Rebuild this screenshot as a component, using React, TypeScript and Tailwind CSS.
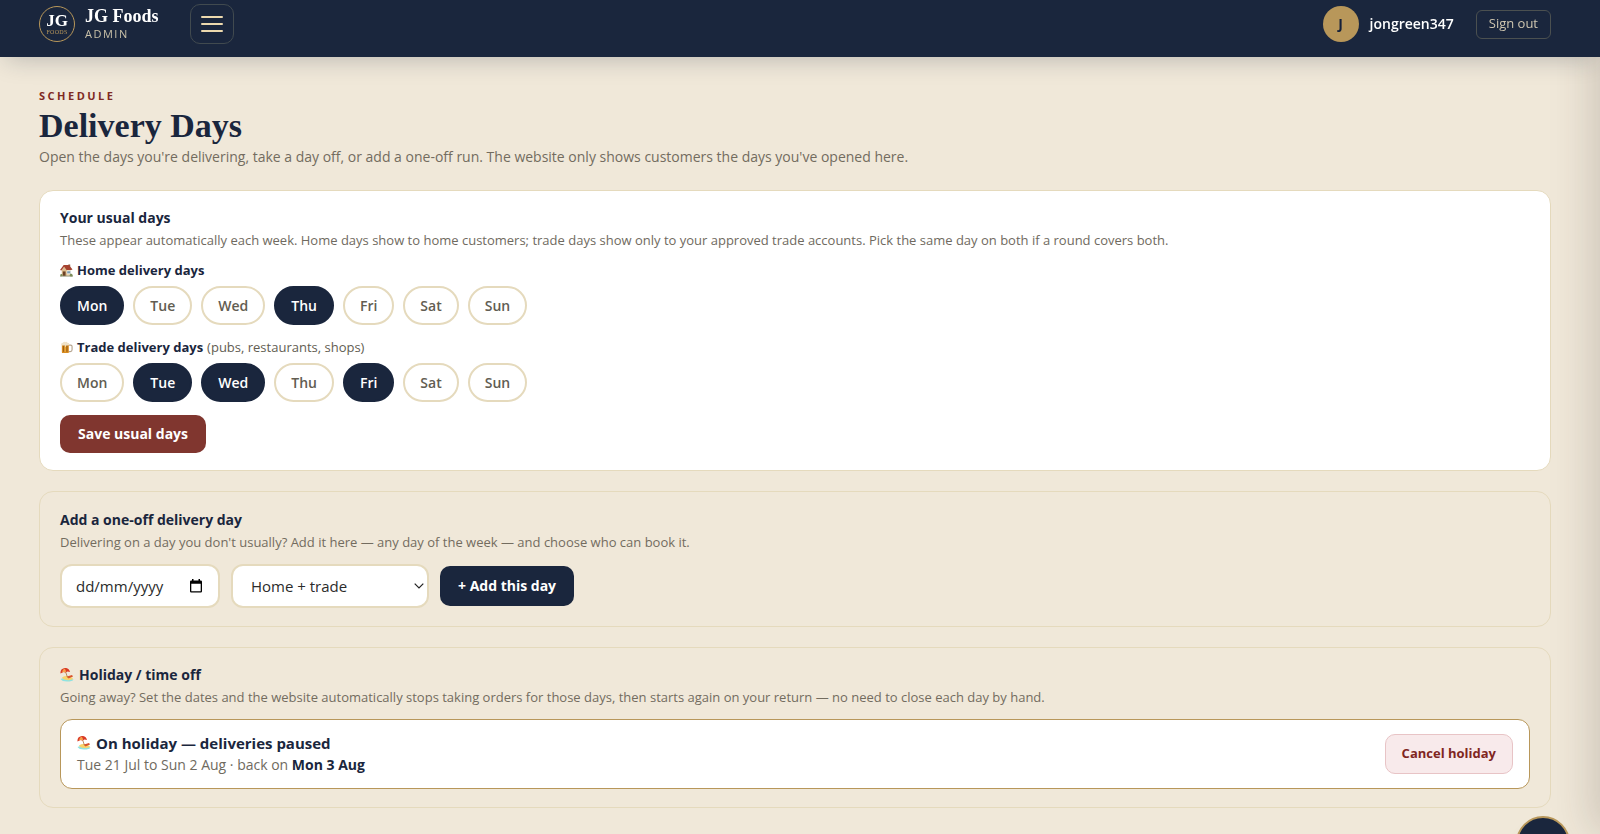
import React, { useState } from 'react';

type IconProps = { className?: string };

const DAYS = ['Mon', 'Tue', 'Wed', 'Thu', 'Fri', 'Sat', 'Sun'];

const HouseIcon: React.FC<IconProps> = ({ className }) => (
  <svg viewBox="0 0 28 28" className={className} aria-hidden="true">
    <rect x="18" y="1" width="4" height="8" fill="#8f5a42" />
    <path d="M4 12 10 5l13 6v15H4z" fill="#ead6b4" />
    <path d="M4 13 10 6l5 7v13H4z" fill="#dcbc8e" />
    <path d="M0 13 8 2h11l8 10-3 1H14L9 6l-6 8z" fill="#a5422f" />
    <rect x="6" y="16" width="6" height="10" fill="#6b4026" />
    <rect x="15" y="15" width="8" height="6" fill="#7d9db0" stroke="#fff" strokeWidth="1" />
    <path d="M0 25h28v2H0z" fill="#8f8f72" />
    <circle cx="24" cy="24" r="3" fill="#7b8c58" />
    <circle cx="3" cy="24" r="2.5" fill="#7b8c58" />
  </svg>
);

const BeerIcon: React.FC<IconProps> = ({ className }) => (
  <svg viewBox="0 0 28 28" className={className} aria-hidden="true">
    <path d="M18 9h5q3 0 3 3v7q0 4-4 4h-4" fill="none" stroke="#b5a48f" strokeWidth="2.5" />
    <path d="M4 6h15v18q0 2-2 2H6q-2 0-2-2z" fill="#d98c1f" />
    <path d="M7 9h2v14H7zM14 9h2v14h-2z" fill="#8a5216" />
    <path d="M10 9h2v14h-2z" fill="#f6bf4e" />
    <path d="M3 8q-1-4 3-4 2-3 6-2 3-1 4 2 5 0 4 4-1 2-3 1-2 2-4 0v3q-1 2-2 0V9Q5 11 3 8z" fill="#efe2c9" />
  </svg>
);

const BeachIcon: React.FC<IconProps> = ({ className }) => (
  <svg viewBox="0 0 28 28" className={className} aria-hidden="true">
    <path d="M1 22q5-3 13-2t13 3q-2 4-13 4-10 0-13-5z" fill="#8fe3e2" />
    <path d="M4 19q8-5 16-1 6 1 6 4-5 3-12 2Q6 23 4 19z" fill="#f7d36b" />
    <path d="m11 7 4 12" stroke="#a56b32" strokeWidth="1.5" />
    <path d="M1 11Q0 2 9 0q9-1 11 8l-5-1-4 2-4-1z" fill="#d93a26" />
    <path d="M4 9q1-6 5-8 3 2 3 7l-2 1-2-1z" fill="#f6a04a" />
    <path d="m14 17 10-3 2 3-9 4z" fill="#d9542d" />
  </svg>
);

const CalendarIcon: React.FC<IconProps> = ({ className }) => (
  <svg viewBox="0 0 12 14" className={className} aria-hidden="true">
    <path
      fillRule="evenodd"
      d="M2 0h1.500v1.500h5V0H10v1.500h.8q1.200 0 1.200 1.200v9.600q0 1.200-1.200 1.200H1.200Q0 13.500 0 12.300V2.700q0-1.200 1.200-1.200H2zM1.300 4.800v7.400h9.400V4.800z"
      fill="#000"
    />
  </svg>
);

const ChevronIcon: React.FC<IconProps> = ({ className }) => (
  <svg viewBox="0 0 10 6" className={className} aria-hidden="true">
    <path d="m.7.7 4.300 4.300L9.300.7" fill="none" stroke="#222" strokeWidth="1.200" />
  </svg>
);

interface DayPickerProps {
  label: string;
  selected: string[];
  onToggle: (day: string) => void;
}

const DayPicker: React.FC<DayPickerProps> = ({ label, selected, onToggle }) => (
  <div role="group" aria-label={label} className="flex flex-wrap gap-[9px]">
    {DAYS.map(day => {
      const active = selected.includes(day);
      return (
        <button
          key={day}
          type="button"
          aria-pressed={active}
          onClick={() => onToggle(day)}
          className={`h-[39px] px-[15px] rounded-full border-2 text-sm font-semibold ${
            active
              ? 'bg-[#1a263d] border-[#1a263d] text-white'
              : 'bg-white border-[#e5dabd] text-[#625d52]'
          }`}
        >
          {day}
        </button>
      );
    })}
  </div>
);

const Header: React.FC = () => (
  <header className="relative z-20 flex items-center bg-[#1a263d] pt-1 pb-[13px] pl-[39px] pr-[49px] shadow-[0_8px_24px_-6px_rgba(26,38,61,0.25)]">
    <div className="flex size-9 flex-col items-center justify-center rounded-full border border-[#b8975a] font-['Liberation_Serif',serif]">
      <span className="text-[17px] leading-4 font-bold text-white">JG</span>
      <span className="text-[6px] leading-[6px] tracking-wider text-[#b8975a]">FOODS</span>
    </div>
    <div className="ml-2.5">
      <div className="font-['Liberation_Serif',serif] text-lg leading-5 font-bold text-white">JG Foods</div>
      <div className="text-[11px] leading-4 tracking-[1.5px] text-[#c9c0a8]">ADMIN</div>
    </div>
    <button
      type="button"
      aria-label="Menu"
      className="ml-[31px] flex h-10 w-11 flex-col items-center justify-center gap-[5px] rounded-[10px] border border-[#414a4f]"
    >
      <span className="h-0.5 w-[22px] rounded bg-[#ecd9ae]" />
      <span className="h-0.5 w-[22px] rounded bg-[#ecd9ae]" />
      <span className="h-0.5 w-[22px] rounded bg-[#ecd9ae]" />
    </button>
    <div className="ml-auto flex items-center">
      <div className="flex size-9 items-center justify-center rounded-full bg-[#b8975a] text-sm font-bold text-[#14203a]">
        J
      </div>
      <span className="ml-[11px] text-sm font-semibold text-white">jongreen347</span>
      <button
        type="button"
        className="ml-[22px] h-[29px] rounded-md border border-[#4b5050] px-3 text-[13px] text-[#cfc6b0]"
      >
        Sign out
      </button>
    </div>
  </header>
);

export default function App() {
  const [homeDays, setHomeDays] = useState<string[]>(['Mon', 'Thu']);
  const [tradeDays, setTradeDays] = useState<string[]>(['Tue', 'Wed', 'Fri']);
  const [date, setDate] = useState('');
  const [audience, setAudience] = useState('both');

  const toggle = (days: string[], day: string) =>
    days.includes(day) ? days.filter(d => d !== day) : [...days, day];

  return (
    <div className="min-h-screen overflow-hidden bg-[#f0e8d9] font-['Open_Sans',sans-serif] text-[#1a263d]">
      <Header />

      <main className="pl-[39px] pr-[49px] pt-[31px] pb-[27px]">
        <p className="text-[11px] leading-4 font-bold tracking-[2.5px] text-[#7f2a24]">SCHEDULE</p>
        <h1 className="font-['Liberation_Serif',serif] text-[34px] leading-[43px] font-bold">Delivery Days</h1>
        <p className="text-sm leading-5 text-[#736c5f]">
          Open the days you're delivering, take a day off, or add a one-off run. The website only shows customers the days you've opened here.
        </p>

        <section className="mt-[23px] rounded-[14px] border border-[#e5dabd] bg-white px-5 pt-4 pb-[17px]">
          <h2 className="text-sm leading-[22px] font-bold">Your usual days</h2>
          <p className="text-[13px] leading-[22px] text-[#6f6a60]">
            These appear automatically each week. Home days show to home customers; trade days show only to your approved trade accounts. Pick the same day on both if a round covers both.
          </p>

          <h3 className="mt-[9px] mb-1.5 flex items-center gap-1 text-[13px] leading-5 font-bold">
            <HouseIcon className="size-[13px]" />
            Home delivery days
          </h3>
          <DayPicker label="Home delivery days" selected={homeDays} onToggle={day => setHomeDays(toggle(homeDays, day))} />

          <h3 className="mt-3 mb-1.5 flex items-center gap-1 text-[13px] leading-5 font-bold">
            <BeerIcon className="size-[13px]" />
            Trade delivery days
            <span className="font-normal text-[#625d52]">(pubs, restaurants, shops)</span>
          </h3>
          <DayPicker label="Trade delivery days" selected={tradeDays} onToggle={day => setTradeDays(toggle(tradeDays, day))} />

          <button type="button" className="mt-[13px] block h-[38px] rounded-[10px] bg-[#80362f] px-[18px] text-sm font-bold text-white">
            Save usual days
          </button>
        </section>

        <section className="mt-5 rounded-[14px] border border-[#e5dabd] px-5 pt-[17px] pb-[18px]">
          <h2 className="text-sm leading-[22px] font-bold">Add a one-off delivery day</h2>
          <p className="text-[13px] leading-[22px] text-[#736c5f]">
            Delivering on a day you don't usually? Add it here — any day of the week — and choose who can book it.
          </p>
          <div className="mt-[11px] flex flex-wrap items-center gap-[11px]">
            <div className="relative">
              <input
                type="text"
                aria-label="Delivery date"
                placeholder="dd/mm/yyyy"
                value={date}
                onChange={e => setDate(e.target.value)}
                className="h-11 w-40 rounded-xl border-2 border-[#e5dabd] bg-white pl-3.5 text-[15px] placeholder:text-[#2b2b2b]"
              />
              <CalendarIcon className="absolute right-[18px] top-[15px] h-3.5 w-3" />
            </div>
            <div className="relative">
              <select
                aria-label="Who can book"
                value={audience}
                onChange={e => setAudience(e.target.value)}
                className="h-11 w-[198px] appearance-none rounded-xl border-2 border-[#e5dabd] bg-white pl-[18px] text-[15px] text-[#2b2b2b]"
              >
                <option value="both">Home + trade</option>
                <option value="home">Home only</option>
                <option value="trade">Trade only</option>
              </select>
              <ChevronIcon className="pointer-events-none absolute right-[5px] top-[19px] h-1.5 w-2.5" />
            </div>
            <button type="button" className="h-10 rounded-[10px] bg-[#1a263d] px-[18px] text-sm font-bold text-white">
              + Add this day
            </button>
          </div>
        </section>

        <section className="mt-5 rounded-[14px] border border-[#e5dabd] px-5 pt-4 pb-[18px]">
          <h2 className="flex items-center gap-[5px] text-sm leading-[22px] font-bold">
            <BeachIcon className="size-3.5" />
            Holiday / time off
          </h2>
          <p className="text-[13px] leading-[22px] text-[#736c5f]">
            Going away? Set the dates and the website automatically stops taking orders for those days, then starts again on your return — no need to close each day by hand.
          </p>
          <div className="mt-[11px] flex items-center justify-between rounded-xl border border-[#b8975a] bg-white px-4 py-3">
            <div>
              <p className="flex items-center gap-[5px] text-[15px] leading-[22px] font-bold">
                <BeachIcon className="size-3.5" />
                On holiday — deliveries paused
              </p>
              <p className="text-sm leading-[22px] text-[#6f6a60]">
                Tue 21 Jul to Sun 2 Aug · back on <strong className="font-bold text-[#1a263d]">Mon 3 Aug</strong>
              </p>
            </div>
            <button type="button" className="h-10 rounded-[10px] border border-[#e8c4c6] bg-[#f8eaeb] px-4 text-[13px] font-bold text-[#80261f]">
              Cancel holiday
            </button>
          </div>
        </section>
      </main>

      {/* closed drawer, only its shadow reaches the page */}
      <aside className="fixed inset-y-0 left-full z-10 w-80 shadow-[-8px_0_40px_rgba(50,38,40,0.18)]" />

      <button
        type="button"
        aria-label="Help"
        className="fixed -bottom-9 right-[30px] z-10 size-[54px] rounded-full border-2 border-[#b8975a] bg-[#1a263d] shadow-lg"
      />
    </div>
  );
}
